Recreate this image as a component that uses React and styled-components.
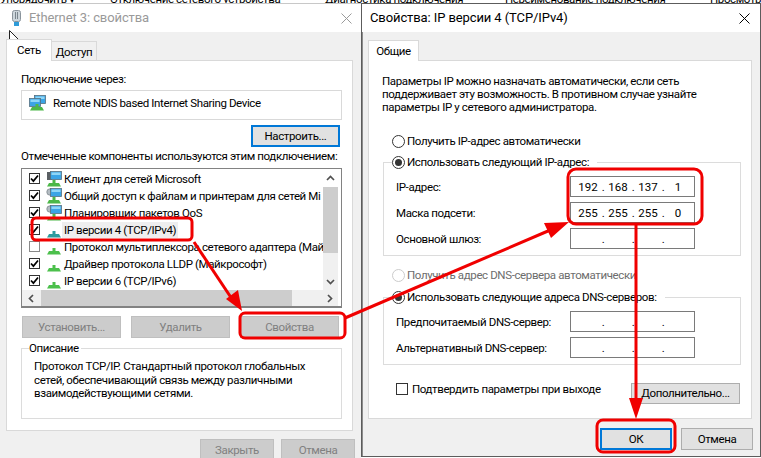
import React from 'react';
import styled, { createGlobalStyle } from 'styled-components';

const Global = createGlobalStyle`
    html, body {
        margin: 0;
        padding: 0;
        background: #fff;
    }
    * {
        box-sizing: border-box;
    }
`;

const Desktop = styled.div`
    position: relative;
    width: 761px;
    height: 458px;
    overflow: hidden;
    background: #fff;
    color: #000;
    font-family: Roboto, "Liberation Sans", sans-serif;
    font-size: 11.5px;
    letter-spacing: -0.38px;
    line-height: 14px;
`;

const BackToolbar = styled.div`
    display: flex;
    align-items: flex-end;
    height: 3px;
    overflow: hidden;
    white-space: nowrap;
    span {
        flex: none;
        height: 14px;
        margin-bottom: -3px;
    }
`;

const ToolItem = styled.span`
    width: ${(p) => p.$w}px;
`;

const Windows = styled.div`
    display: flex;
    align-items: flex-start;
`;

const LeftWindow = styled.div`
    flex: none;
    width: 361px;
    height: 455px;
    overflow: hidden;
    background: #f0f0f0;
    border-top: 1px solid #c8c8c8;
`;

const RightWindow = styled.div`
    flex: none;
    width: 400px;
    height: 454px;
    background: #f0f0f0;
    border: 1px solid #5c5c5c;
    box-shadow: inset 1px 0 0 #8c8c8c;
`;

const TitleBar = styled.div`
    display: flex;
    align-items: center;
    height: ${(p) => p.$h}px;
    padding: ${(p) => (p.$inactive ? '0 9px 0 11px' : '0 10px 0 8px')};
    gap: 7px;
    background: #fff;
    color: ${(p) => (p.$inactive ? '#9a9a9a' : '#000')};
    font-size: 13px;
    letter-spacing: -0.1px;
    span {
        flex: 1;
    }
    svg {
        flex: none;
    }
`;

const Body = styled.div`
    padding: ${(p) => p.$top}px 0 0 ${(p) => p.$left}px;
`;

const TabRow = styled.div`
    display: flex;
    align-items: flex-end;
    position: relative;
    z-index: 1;
    margin-bottom: -1px;
`;

const Tab = styled.div`
    width: ${(p) => p.$w}px;
    height: ${(p) => p.$h}px;
    margin-left: ${(p) => (p.$active ? 0 : -1)}px;
    padding-top: 3px;
    text-align: center;
    background: ${(p) => (p.$active ? '#fff' : '#f0f0f0')};
    border: 1px solid #d9d9d9;
    border-bottom: ${(p) => (p.$active ? 'none' : '1px solid #d9d9d9')};
`;

const Panel = styled.div`
    width: ${(p) => p.$w}px;
    height: ${(p) => p.$h}px;
    padding: ${(p) => p.$pad};
    background: #fff;
    border: 1px solid #d9d9d9;
`;

const Caption = styled.div`
    margin-top: ${(p) => p.$top}px;
    white-space: nowrap;
`;

const DeviceBox = styled.div`
    display: flex;
    align-items: center;
    gap: 7px;
    width: 321px;
    height: 30px;
    margin-top: 4px;
    padding: 0 0 4px 7px;
    border: 1px solid #d9d9d9;
    svg {
        flex: none;
    }
`;

const Button = styled.div`
    flex: none;
    display: flex;
    align-items: center;
    justify-content: center;
    width: ${(p) => p.$w}px;
    height: ${(p) => p.$h || 22}px;
    padding-bottom: 1px;
    white-space: nowrap;
    background: ${(p) => (p.$off ? '#cccccc' : '#e1e1e1')};
    color: ${(p) => (p.$off ? '#808080' : '#000')};
    border: ${(p) =>
        p.$focus ? '2px solid #0078d7' : p.$off ? '1px solid #bfbfbf' : '1px solid #adadad'};
`;

const ButtonLine = styled.div`
    display: flex;
    justify-content: ${(p) => p.$justify || 'flex-start'};
    gap: ${(p) => p.$gap || 0}px;
    margin-top: ${(p) => p.$top}px;
    padding: ${(p) => p.$pad || 0};
`;

const ListFrame = styled.div`
    display: grid;
    grid-template-columns: 301px 15px;
    grid-template-rows: 121px 16px;
    width: 321px;
    height: 140px;
    margin-top: 5px;
    border: 1px solid #828282;
    border-width: 1px 1px 2px 1px;
`;

const ListRows = styled.div`
    padding-top: 1px;
    overflow: hidden;
    background: #fff;
`;

const ListRow = styled.div`
    display: flex;
    align-items: center;
    gap: 6px;
    height: 17px;
    padding-left: 7px;
    white-space: nowrap;
    svg {
        flex: none;
    }
`;

const RowLabel = styled.span`
    flex: none;
    margin-left: -6px;
    padding: 1px 2px;
    background: ${(p) => (p.$selected ? '#eeeeee' : 'transparent')};
`;

const Check = styled.div`
    flex: none;
    width: ${(p) => p.$size || 11}px;
    height: ${(p) => p.$size || 11}px;
    display: flex;
    align-items: center;
    justify-content: center;
    background: #fff;
    border: 1px solid ${(p) => (p.$dark ? '#333' : '#8a8a8a')};
`;

const VScroll = styled.div`
    display: flex;
    flex-direction: column;
    background: #f0f0f0;
`;

const VThumb = styled.div`
    height: 66px;
    background: #cdcdcd;
`;

const ScrollArrow = styled.div`
    flex: none;
    display: flex;
    align-items: center;
    justify-content: center;
    height: ${(p) => p.$h}px;
    width: ${(p) => p.$w}px;
    margin-top: ${(p) => (p.$push ? 'auto' : 0)};
    margin-left: ${(p) => (p.$pushLeft ? 'auto' : 0)};
    background: ${(p) => (p.$plain ? '#fff' : 'transparent')};
`;

const HScroll = styled.div`
    grid-column: 1 / span 2;
    display: flex;
    background: #f0f0f0;
`;

const HThumb = styled.div`
    width: 251px;
    margin-left: 1px;
    background: #cdcdcd;
`;

const Group = styled.div`
    width: ${(p) => p.$w}px;
    height: ${(p) => p.$h}px;
    margin-top: ${(p) => p.$top}px;
    margin-left: ${(p) => p.$left || 0}px;
    padding: ${(p) => p.$pad || 0};
    border: 1px solid #dcdcdc;
`;

const Legend = styled.div`
    display: flex;
    align-items: center;
    gap: 2px;
    width: fit-content;
    height: 14px;
    margin: -8px 0 0 ${(p) => p.$left}px;
    padding-right: ${(p) => p.$right || 2}px;
    background: #fff;
    white-space: nowrap;
`;

const Paragraph = styled.div`
    margin-top: ${(p) => p.$top || 0}px;
    line-height: ${(p) => p.$lh}px;
    white-space: nowrap;
`;

const Radio = styled.div`
    flex: none;
    display: flex;
    align-items: center;
    justify-content: center;
    width: 13px;
    height: 13px;
    border-radius: 50%;
    background: #fff;
    border: 1px solid ${(p) => (p.$off ? '#cccccc' : '#333333')};
    &::after {
        content: '';
        display: ${(p) => (p.$on ? 'block' : 'none')};
        width: 7px;
        height: 7px;
        border-radius: 50%;
        background: #333;
    }
`;

const RadioLine = styled.div`
    display: flex;
    align-items: center;
    gap: 2px;
    height: 14px;
    margin: ${(p) => p.$top}px 0 0 10px;
    color: ${(p) => (p.$off ? '#6d6d6d' : '#000')};
    white-space: nowrap;
`;

const FieldRow = styled.div`
    display: flex;
    align-items: center;
    justify-content: space-between;
    height: 21px;
    margin-top: ${(p) => p.$top}px;
    padding: 0 45px 0 12px;
    white-space: nowrap;
`;

const IpField = styled.div`
    display: flex;
    align-items: center;
    width: 125px;
    height: 21px;
    padding-left: 4px;
    background: #fff;
    border: 1px solid #7a7a7a;
`;

const Octet = styled.span`
    width: 26px;
    text-align: center;
    letter-spacing: 0;
`;

const Dot = styled.span`
    width: 4px;
    text-align: center;
`;

const ConfirmLine = styled.div`
    display: flex;
    align-items: flex-start;
    margin-top: 18px;
    padding: 0 11px 0 14px;
`;

const ConfirmLabel = styled.span`
    margin-left: 4px;
    flex: 1;
    white-space: nowrap;
    margin-top: -1px;
`;

const Overlay = styled.svg`
    position: absolute;
    left: 0;
    top: 0;
    pointer-events: none;
`;

const CloseIcon = ({ color }) => (
    <svg width="11" height="11" viewBox="0 0 11 11">
        <path d="M.5.5l10 10M10.5.5l-10 10" stroke={color} fill="none" />
    </svg>
);

const TickMark = () => (
    <svg width="9" height="9" viewBox="0 0 9 9">
        <path d="M1 4.5l2.4 2.6L8 1.5" stroke="#000" strokeWidth="1.7" fill="none" />
    </svg>
);

const AdapterIcon = () => (
    <svg width="11" height="17" viewBox="0 0 11 17">
        <rect x="1.5" y="0.5" width="8" height="11" rx="2" fill="#cdd6dc" stroke="#8a949c" />
        <rect x="4" y="2" width="1" height="7" fill="#7b868e" />
        <rect x="6" y="2" width="1" height="7" fill="#7b868e" />
        <rect x="3" y="12" width="5" height="4" fill="#2e9bd8" />
    </svg>
);

const Monitor = ({ x, y }) => (
    <g>
        <rect x={x} y={y} width="11" height="8" fill="#3ba4e6" stroke="#56707f" strokeWidth="0.8" />
        <rect x={x + 1} y={y + 1} width="9" height="2.5" fill="#8fd6f7" />
    </g>
);

const ProtoBase = ({ color }) => (
    <g fill={color}>
        <rect x="6.5" y="9" width="3" height="3" />
        <path d="M3 12h10l2 3.5H1z" />
    </g>
);

const DeviceIcon = () => (
    <svg width="17" height="16" viewBox="0 0 17 16">
        <Monitor x={5.5} y={0.5} />
        <Monitor x={0.5} y={3.5} />
        <ProtoBase color="#4cb848" />
    </svg>
);

const ComponentIcon = ({ kind }) => {
    if (kind === 'proto' || kind === 'selected') {
        return (
            <svg width="16" height="16" viewBox="0 0 16 16">
                <ProtoBase color={kind === 'selected' ? '#2f9c9e' : '#4cc04c'} />
            </svg>
        );
    }
    return (
        <svg width="16" height="16" viewBox="0 0 16 16">
            {kind === 'client' ? (
                <rect x="1" y="1" width="5" height="8" fill="#5a5f63" />
            ) : (
                <circle cx="4" cy="4" r="3.2" fill="#b4bcc2" stroke="#7f888e" strokeWidth="0.8" />
            )}
            <Monitor x={4.5} y={0.5} />
            <ProtoBase color="#4cb848" />
        </svg>
    );
};

const Chevron = ({ d }) => (
    <svg width="9" height="9" viewBox="0 0 9 9">
        <path d={d} stroke="#505050" strokeWidth="1.7" fill="none" />
    </svg>
);

const rows = [
    { on: true, kind: 'client', text: 'Клиент для сетей Microsoft' },
    { on: true, kind: 'share', text: 'Общий доступ к файлам и принтерам для сетей Mi' },
    { on: true, kind: 'share', text: 'Планировщик пакетов QoS' },
    { on: true, kind: 'selected', text: 'IP версии 4 (TCP/IPv4)' },
    { on: false, kind: 'proto', text: 'Протокол мультиплексора сетевого адаптера (Май' },
    { on: true, kind: 'proto', text: 'Драйвер протокола LLDP (Майкрософт)' },
    { on: true, kind: 'proto', text: 'IP версии 6 (TCP/IPv6)' },
];

const IpInput = ({ value = ['', '', '', ''] }) => (
    <IpField>
        <Octet>{value[0]}</Octet>
        <Dot>.</Dot>
        <Octet>{value[1]}</Octet>
        <Dot>.</Dot>
        <Octet>{value[2]}</Octet>
        <Dot>.</Dot>
        <Octet>{value[3]}</Octet>
    </IpField>
);

const Annotations = () => (
    <Overlay width="761" height="458" viewBox="0 0 761 458">
        <g fill="none" stroke="#f00000" strokeWidth="3">
            <rect x="32" y="218" width="160" height="22" rx="4" />
            <rect x="240" y="313" width="105" height="25" rx="5" />
            <rect x="568" y="169" width="134" height="55" rx="8" />
            <rect x="597" y="420" width="78" height="32" rx="6" />
            <path d="M194 242l40 60" />
            <path d="M345 318l210 -90" />
            <path d="M636 225v180" />
        </g>
        <g fill="#f00000">
            <path d="M242 311l-16 -12 12 -9z" />
            <path d="M569 222l-25 1 7 15z" />
            <path d="M636 419l-7 -21h14z" />
        </g>
        <path
            d="M9.5 30.5v14l3.2-3 2.6 6 2.4-1-2.6-5.8h4.6z"
            fill="#fff"
            stroke="#222"
            strokeWidth="1"
        />
    </Overlay>
);

const App = () => {
    return (
        <Desktop>
            <Global />
            <BackToolbar>
                <ToolItem $w={110}>Упорядочить ▾</ToolItem>
                <ToolItem $w={215}>Отключение сетевого устройства</ToolItem>
                <ToolItem $w={180}>Диагностика подключения</ToolItem>
                <ToolItem $w={205}>Переименование подключения</ToolItem>
                <ToolItem $w={200}>Просмотр состояния</ToolItem>
            </BackToolbar>
            <Windows>
                <LeftWindow>
                    <TitleBar $h={28} $inactive>
                        <AdapterIcon />
                        <span>Ethernet 3: свойства</span>
                        <CloseIcon color="#9a9a9a" />
                    </TitleBar>
                    <Body $top={7} $left={6}>
                        <TabRow>
                            <Tab $w={46} $h={22} $active>Сеть</Tab>
                            <Tab $w={46} $h={20}>Доступ</Tab>
                        </TabRow>
                        <Panel $w={347} $h={371} $pad="0 10px 0 14px">
                            <Caption $top={11}>Подключение через:</Caption>
                            <DeviceBox>
                                <DeviceIcon />
                                Remote NDIS based Internet Sharing Device
                            </DeviceBox>
                            <ButtonLine $top={5} $justify="flex-end" $pad="0 2px 0 0">
                                <Button $w={89} $focus>Настроить...</Button>
                            </ButtonLine>
                            <Caption $top={2}>Отмеченные компоненты используются этим подключением:</Caption>
                            <ListFrame>
                                <ListRows>
                                    {rows.map((row) => (
                                        <ListRow key={row.text}>
                                            <Check $dark={row.on}>{row.on && <TickMark />}</Check>
                                            <ComponentIcon kind={row.kind} />
                                            <RowLabel $selected={row.kind === 'selected'}>{row.text}</RowLabel>
                                        </ListRow>
                                    ))}
                                </ListRows>
                                <VScroll>
                                    <ScrollArrow $h={18} $w={15} $plain>
                                        <Chevron d="M1 6l3.5-3.5L8 6" />
                                    </ScrollArrow>
                                    <VThumb />
                                    <ScrollArrow $h={17} $w={15} $push>
                                        <Chevron d="M1 3l3.5 3.5L8 3" />
                                    </ScrollArrow>
                                </VScroll>
                                <HScroll>
                                    <ScrollArrow $h={16} $w={18}>
                                        <Chevron d="M6 1L2.5 4.5 6 8" />
                                    </ScrollArrow>
                                    <HThumb />
                                    <ScrollArrow $h={16} $w={17} $pushLeft>
                                        <Chevron d="M3 1l3.5 3.5L3 8" />
                                    </ScrollArrow>
                                </HScroll>
                            </ListFrame>
                            <ButtonLine $top={8} $gap={10} $pad="0 0 0 1px">
                                <Button $w={99} $off>Установить...</Button>
                                <Button $w={99} $off>Удалить</Button>
                                <Button $w={99} $off>Свойства</Button>
                            </ButtonLine>
                            <Group $w={321} $h={71} $top={10} $pad="0 0 0 12px">
                                <Legend $left={-5}>Описание</Legend>
                                <Paragraph $top={5} $lh={13.5}>
                                    Протокол TCP/IP. Стандартный протокол глобальных
                                    <br />
                                    сетей, обеспечивающий связь между различными
                                    <br />
                                    взаимодействующими сетями.
                                </Paragraph>
                            </Group>
                        </Panel>
                        <ButtonLine $top={8} $gap={7} $pad="0 0 0 194px">
                            <Button $w={74} $off>Закрыть</Button>
                            <Button $w={74} $off>Отмена</Button>
                        </ButtonLine>
                    </Body>
                </LeftWindow>
                <RightWindow>
                    <TitleBar $h={28}>
                        <span>Свойства: IP версии 4 (TCP/IPv4)</span>
                        <CloseIcon color="#000" />
                    </TitleBar>
                    <Body $top={8} $left={6}>
                        <TabRow>
                            <Tab $w={51} $h={21} $active>Общие</Tab>
                        </TabRow>
                        <Panel $w={384} $h={359} $pad="14px 0 0 13px">
                            <Paragraph $lh={13}>
                                Параметры IP можно назначать автоматически, если сеть
                                <br />
                                поддерживает эту возможность. В противном случае узнайте
                                <br />
                                параметры IP у сетевого администратора.
                            </Paragraph>
                            <RadioLine $top={20}>
                                <Radio />
                                Получить IP-адрес автоматически
                            </RadioLine>
                            <Group $w={358} $h={94} $top={14} $left={1}>
                                <Legend $left={8} $right={8}>
                                    <Radio $on />
                                    Использовать следующий IP-адрес:
                                </Legend>
                                <FieldRow $top={7}>
                                    IP-адрес:
                                    <IpInput value={['192', '168', '137', '1']} />
                                </FieldRow>
                                <FieldRow $top={5}>
                                    Маска подсети:
                                    <IpInput value={['255', '255', '255', '0']} />
                                </FieldRow>
                                <FieldRow $top={5}>
                                    Основной шлюз:
                                    <IpInput />
                                </FieldRow>
                            </Group>
                            <RadioLine $top={12} $off>
                                <Radio $off />
                                Получить адрес DNS-сервера автоматически
                            </RadioLine>
                            <Group $w={358} $h={68} $top={15} $left={1}>
                                <Legend $left={8} $right={8}>
                                    <Radio $on />
                                    Использовать следующие адреса DNS-серверов:
                                </Legend>
                                <FieldRow $top={7}>
                                    Предпочитаемый DNS-сервер:
                                    <IpInput />
                                </FieldRow>
                                <FieldRow $top={5}>
                                    Альтернативный DNS-сервер:
                                    <IpInput />
                                </FieldRow>
                            </Group>
                            <ConfirmLine>
                                <Check $size={12} $dark />
                                <ConfirmLabel>Подтвердить параметры при выходе</ConfirmLabel>
                                <Button $w={109} $h={21}>Дополнительно...</Button>
                            </ConfirmLine>
                        </Panel>
                        <ButtonLine $top={9} $gap={9} $pad="0 0 0 232px">
                            <Button $w={72} $focus>ОК</Button>
                            <Button $w={72}>Отмена</Button>
                        </ButtonLine>
                    </Body>
                </RightWindow>
            </Windows>
            <Annotations />
        </Desktop>
    );
};

export default App;
